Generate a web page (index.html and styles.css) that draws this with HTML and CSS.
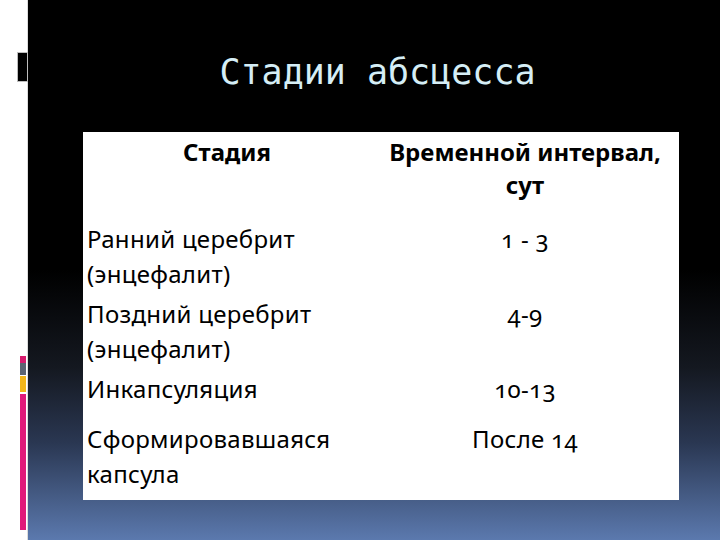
FILE: index.html
```html
<!DOCTYPE html>
<html lang="ru">
<head>
<meta charset="utf-8">
<title>Стадии абсцесса</title>
<link rel="stylesheet" href="styles.css">
</head>
<body>
<div class="slide">
  <aside class="rail">
    <div class="rail-block"></div>
    <div class="rail-bar">
      <span class="seg seg-pink-s"></span>
      <span class="seg seg-gray"></span>
      <span class="seg seg-yellow"></span>
      <span class="seg seg-pink-l"></span>
    </div>
  </aside>
  <main class="stage">
    <h1 class="title">Стадии абсцесса</h1>
    <div class="table">
      <div class="cell head">Стадия</div>
      <div class="cell head">Временной интервал, сут</div>

      <div class="cell name">Ранний церебрит (энцефалит)</div>
      <div class="cell val">1 - 3</div>

      <div class="cell name">Поздний церебрит (энцефалит)</div>
      <div class="cell val">4-9</div>

      <div class="cell name">Инкапсуляция</div>
      <div class="cell val">10-13</div>

      <div class="cell name">Сформировавшаяся капсула</div>
      <div class="cell val">После 14</div>
    </div>
  </main>
</div>
</body>
</html>
```
FILE: styles.css
```css
html, body {
  margin: 0;
  padding: 0;
}
body {
  width: 720px;
  height: 540px;
  overflow: hidden;
  background: #ffffff;
}
.slide {
  display: flex;
  width: 720px;
  height: 540px;
}
.rail {
  width: 28px;
  flex: 0 0 28px;
  background: #ffffff;
  border-right: 1px solid #dcdcdc;
  display: flex;
  flex-direction: column;
  padding-top: 52px;
  box-sizing: border-box;
}
.rail-block {
  width: 9px;
  height: 28px;
  margin-left: 17px;
  background: #000000;
  border: 1px solid #bdbdbd;
}
.rail-bar {
  margin-top: 274px;
  margin-left: 20px;
  width: 6px;
  display: flex;
  flex-direction: column;
}
.seg { display: block; }
.seg-pink-s { height: 7px; background: #d81b6e; }
.seg-gray { height: 12px; background: #5c6472; }
.seg-yellow { height: 16px; margin-top: 1px; background: #f2b61a; }
.seg-pink-l { height: 136px; margin-top: 2px; background: #e0197a; }

.stage {
  flex: 1;
  background: linear-gradient(to bottom, #000000 0%, #000000 50%, #141820 68%, #2a3752 82%, #5b79ae 100%);
  display: flex;
  flex-direction: column;
}
.title {
  margin: 0;
  padding: 52px 0 0 7px;
  height: 40px;
  font-family: "DejaVu Sans Mono", monospace;
  font-weight: normal;
  font-size: 35px;
  line-height: 40px;
  color: #d5eef6;
  text-align: center;
}
.table {
  margin-top: 40px;
  margin-left: 55px;
  width: 596px;
  background: #ffffff;
  display: grid;
  grid-template-columns: 288px 308px;
  grid-template-rows: 87px 75px 75px 50px 81px;
  font-family: "Noto Sans", sans-serif;
  font-size: 24px;
  line-height: 35px;
  letter-spacing: 0.3px;
  color: #000000;
  font-variant-numeric: oldstyle-nums;
}
.cell {
  padding: 2px 4px 0 4px;
  box-sizing: border-box;
}
.head {
  font-weight: bold;
  text-align: center;
  line-height: 33px;
  letter-spacing: 0;
  padding: 3px 12px 0 12px;
}
.name {
  text-align: left;
}
.val {
  text-align: center;
}
```
